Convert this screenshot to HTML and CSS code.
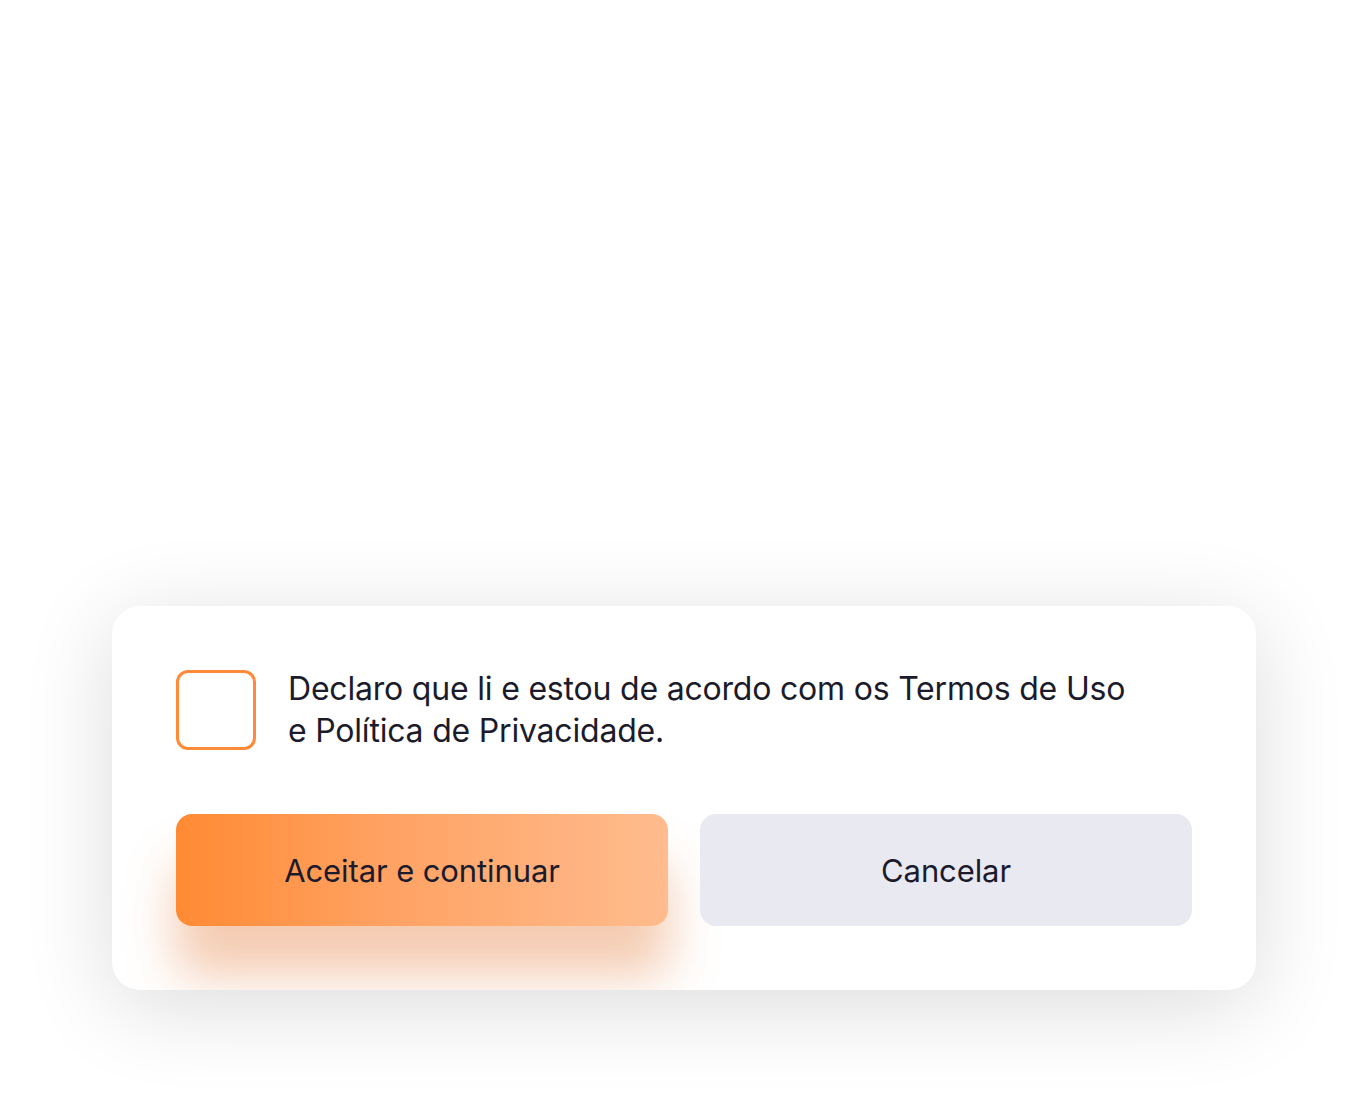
FILE: index.html
```html
<!DOCTYPE html>
<html lang="pt">
<head>
<meta charset="utf-8">
<title>Termos</title>
<link rel="stylesheet" href="styles.css">
</head>
<body>
<div class="page">
  <div class="card">
    <label class="consent">
      <span class="box"></span>
      <span class="consent-text">Declaro que li e estou de acordo com os Termos de Uso<br>e Política de Privacidade.</span>
    </label>
    <div class="actions">
      <button class="btn btn-primary">Aceitar e continuar</button>
      <button class="btn btn-secondary">Cancelar</button>
    </div>
  </div>
</div>
</body>
</html>
```

FILE: styles.css
```css
html, body {
  margin: 0;
  padding: 0;
  background: #ffffff;
}
body {
  font-family: "Inter", "Noto Sans", sans-serif;
  color: #1b1b2b;
}
.page {
  padding: 606px 112px 112px 112px;
}
.card {
  background: #ffffff;
  border-radius: 28px;
  padding: 64px;
  box-shadow: 0 16px 90px rgba(0, 0, 0, 0.14);
  display: flex;
  flex-direction: column;
  gap: 64px;
  overflow: hidden;
}
.consent {
  display: flex;
  align-items: flex-start;
  gap: 32px;
}
.box {
  flex: none;
  width: 74px;
  height: 74px;
  border: 3px solid #ff8a3a;
  border-radius: 12px;
}
.consent-text {
  font-size: 32px;
  line-height: 42px;
  letter-spacing: -0.2px;
  margin-top: -2px;
  margin-bottom: -4px;
}
.actions {
  display: flex;
  gap: 32px;
}
.btn {
  width: 492px;
  height: 112px;
  border: none;
  border-radius: 16px;
  font-family: "Inter", "Noto Sans", sans-serif;
  font-size: 31px;
  letter-spacing: -0.1px;
  color: #1b1b2b;
  cursor: pointer;
}
.btn-primary {
  background: linear-gradient(90deg, #ff8a33 0%, #ffa365 45%, #ffbc8e 100%);
  box-shadow: 0 50px 50px rgba(228, 130, 70, 0.42);
}
.btn-secondary {
  background: #e9e9f2;
}
```
